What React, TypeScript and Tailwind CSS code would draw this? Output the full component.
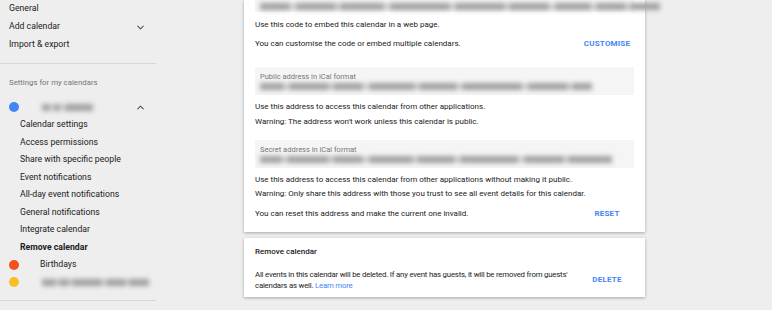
import { ChevronDown, ChevronUp } from 'lucide-react'

const subItems = [
  'Calendar settings',
  'Access permissions',
  'Share with specific people',
  'Event notifications',
  'All-day event notifications',
  'General notifications',
  'Integrate calendar',
]

// redacted text in the screenshot: blurred grey smudges
function Smudge({ parts, className = '' }: { parts: number[]; className?: string }) {
  return (
    <div className={`flex items-center h-[9px] blur-[2.5px] ${className}`}>
      {parts.map((w, i) => (
        <span
          key={i}
          className={i % 2 === 0 ? 'h-[7px] bg-[#a0a0a0]' : 'h-[5px] bg-[#cfcfcf]'}
          style={{ width: w }}
        />
      ))}
    </div>
  )
}

function Sidebar() {
  return (
    <aside className="w-[156px] shrink-0 text-[8.7px] text-[#212121]">
      <div className="pb-[9px] border-b border-[#d6d6d6]">
        <div className="h-[18px] pl-[9px] flex items-center">General</div>
        <div className="h-[18px] pl-[9px] pr-[10px] flex items-center justify-between">
          <span>Add calendar</span>
          <ChevronDown size={11} strokeWidth={2.5} className="text-[#555]" />
        </div>
        <div className="h-[18px] pl-[9px] flex items-center">Import &amp; export</div>
      </div>

      <div className="h-[22px] mt-[8px] pl-[9px] flex items-center text-[7.8px] text-[#757575]">
        Settings for my calendars
      </div>

      <div className="h-[18px] mt-[4px] pl-[9px] pr-[10px] flex items-center">
        <span className="w-[10px] h-[10px] rounded-full bg-[#4285f4]" />
        <Smudge parts={[8, 4, 6, 5, 28]} className="ml-[23px]" />
        <ChevronUp size={11} strokeWidth={2.5} className="ml-auto text-[#555]" />
      </div>
      {subItems.map((s) => (
        <div key={s} className="h-[17.5px] pl-[20px] flex items-center">
          {s}
        </div>
      ))}
      <div className="h-[17.5px] pl-[20px] flex items-center font-bold">Remove calendar</div>
      <div className="h-[17.5px] pl-[9px] flex items-center">
        <span className="w-[10px] h-[10px] rounded-full bg-[#f4511e]" />
        <span className="ml-[21px]">Birthdays</span>
      </div>
      <div className="h-[17.5px] pl-[9px] flex items-center">
        <span className="w-[10px] h-[10px] rounded-full bg-[#f6bf26]" />
        <Smudge parts={[14, 3, 10, 3, 30, 4, 20, 3, 20]} className="ml-[23px]" />
      </div>
      <div className="mt-[9px] border-b border-[#d6d6d6]" />
    </aside>
  )
}

function Action({ label }: { label: string }) {
  return (
    <span className="w-[54px] shrink-0 text-center text-[8px] font-bold text-[#4285f4] tracking-[0.2px]">
      {label}
    </span>
  )
}

function AddressBox({ label, parts }: { label: string; parts: number[] }) {
  return (
    <div className="h-[28px] bg-[#f5f5f5] pl-[5px] pr-[4px] flex flex-col justify-center">
      <div className="text-[7.5px] text-[#757575] leading-[10px]">{label}</div>
      <Smudge parts={parts} />
    </div>
  )
}

export default function App() {
  return (
    <div
      className="w-[772px] h-[310px] bg-[#eeeeee] flex overflow-hidden text-[#212121]"
      style={{ fontFamily: 'Roboto, "Liberation Sans", sans-serif' }}
    >
      <Sidebar />
      <main className="ml-[88px] w-[401px] flex flex-col gap-[6px]">
        <section className="bg-white shadow-[0_1px_3px_rgba(0,0,0,0.3)] px-[11px] pb-[12px] text-[8px]">
          <div className="h-[12px] bg-[#f5f5f5] pl-[5px] flex items-center">
            <Smudge parts={[30, 6, 40, 4, 44, 6, 60, 5, 50, 4, 40, 6, 36, 5, 30, 4, 30]} />
          </div>
          <div className="h-[25px] flex items-center">Use this code to embed this calendar in a web page.</div>
          <div className="h-[13px] flex items-center justify-between">
            <span>You can customise the code or embed multiple calendars.</span>
            <Action label="CUSTOMISE" />
          </div>
          <div className="h-[17px]" />
          <AddressBox label="Public address in iCal format" parts={[24, 5, 40, 4, 30, 6, 46, 4, 38, 5, 60, 6, 40, 4, 20]} />
          <div className="h-[18px] flex items-end">Use this address to access this calendar from other applications.</div>
          <div className="h-[17px] flex items-center">Warning: The address won't work unless this calendar is public.</div>
          <div className="h-[10px]" />
          <AddressBox label="Secret address in iCal format" parts={[22, 5, 42, 4, 30, 6, 44, 4, 38, 5, 58, 6, 40, 4, 44]} />
          <div className="h-[18px] flex items-end">
            Use this address to access this calendar from other applications without making it public.
          </div>
          <div className="h-[16px] flex items-center">
            Warning: Only share this address with those you trust to see all event details for this calendar.
          </div>
          <div className="h-[18px] flex items-end justify-between">
            <span>You can reset this address and make the current one invalid.</span>
            <Action label="RESET" />
          </div>
        </section>

        <section className="bg-white shadow-[0_1px_3px_rgba(0,0,0,0.3)] px-[11px] pt-[8px] pb-[6px] text-[8px]">
          <div className="h-[12px] flex items-center font-medium">Remove calendar</div>
          <div className="mt-[11px] flex items-center justify-between">
            <p className="w-[325px] leading-[11px] text-[7.8px] tracking-[-0.2px]">
              All events in this calendar will be deleted. If any event has guests, it will be removed from guests'
              calendars as well. <span className="text-[#4285f4]">Learn more</span>
            </p>
            <Action label="DELETE" />
          </div>
        </section>
      </main>
    </div>
  )
}
